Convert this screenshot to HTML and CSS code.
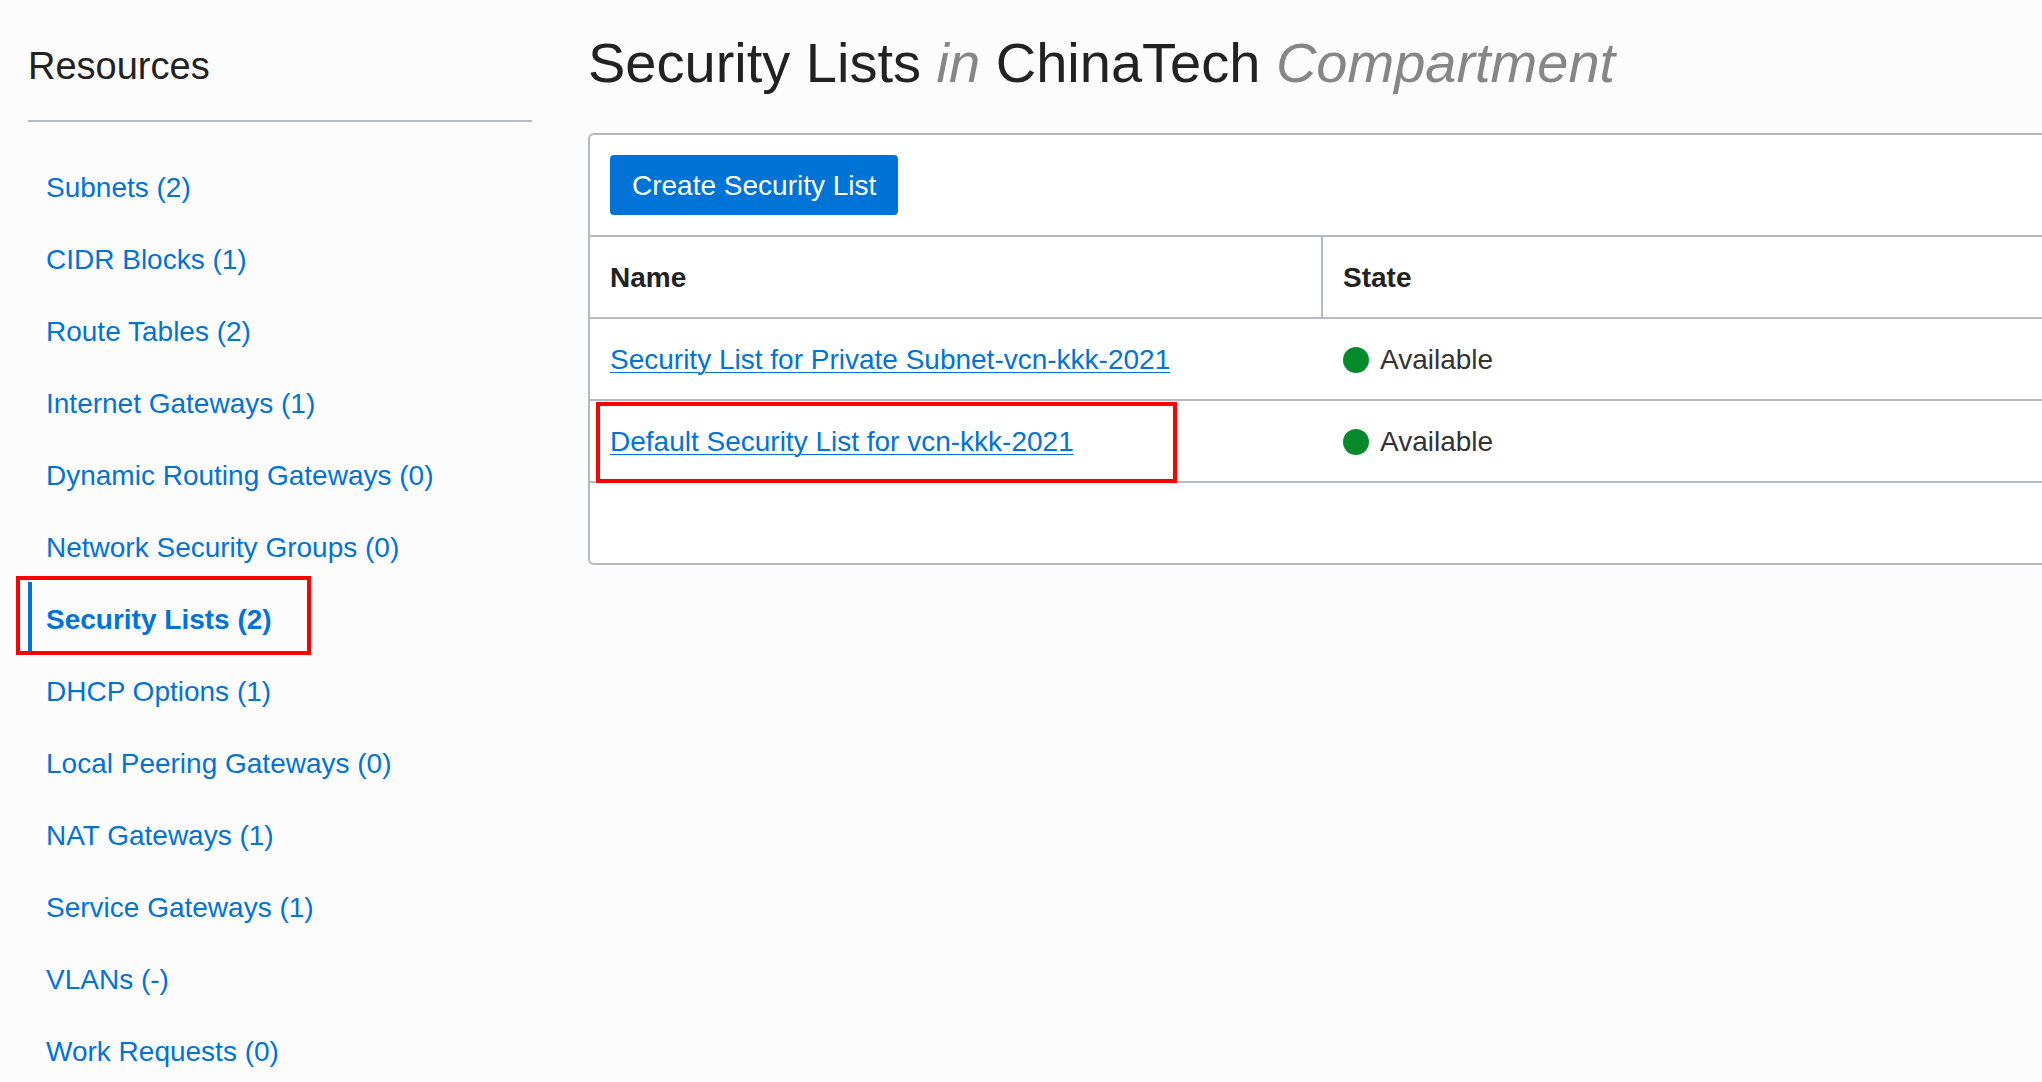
FILE: index.html
```html
<!DOCTYPE html>
<html lang="en">
<head>
<meta charset="utf-8">
<title>Security Lists</title>
<link rel="stylesheet" href="styles.css">
</head>
<body>
<div class="page">
  <nav class="sidebar" aria-labelledby="resources-title">
    <h2 class="sidebar-title" id="resources-title">Resources</h2>
    <ul class="resource-list">
      <li class="resource"><a href="#">Subnets (2)</a></li>
      <li class="resource"><a href="#">CIDR Blocks (1)</a></li>
      <li class="resource"><a href="#">Route Tables (2)</a></li>
      <li class="resource"><a href="#">Internet Gateways (1)</a></li>
      <li class="resource"><a href="#">Dynamic Routing Gateways (0)</a></li>
      <li class="resource"><a href="#">Network Security Groups (0)</a></li>
      <li class="resource active"><a href="#" aria-current="page">Security Lists (2)</a></li>
      <li class="resource"><a href="#">DHCP Options (1)</a></li>
      <li class="resource"><a href="#">Local Peering Gateways (0)</a></li>
      <li class="resource"><a href="#">NAT Gateways (1)</a></li>
      <li class="resource"><a href="#">Service Gateways (1)</a></li>
      <li class="resource"><a href="#">VLANs (-)</a></li>
      <li class="resource"><a href="#">Work Requests (0)</a></li>
    </ul>
  </nav>
  <main class="content">
    <h1 class="title">Security Lists <em>in</em> ChinaTech <em>Compartment</em></h1>
    <section class="panel">
      <div class="toolbar"><button class="create" type="button">Create Security List</button></div>
      <table class="lists">
        <thead>
          <tr><th class="name-col" scope="col">Name</th><th scope="col">State</th></tr>
        </thead>
        <tbody>
          <tr>
            <td><a href="#">Security List for Private Subnet-vcn-kkk-2021</a></td>
            <td><span class="state">Available</span></td>
          </tr>
          <tr>
            <td class="marked"><a href="#">Default Security List for vcn-kkk-2021</a></td>
            <td><span class="state">Available</span></td>
          </tr>
        </tbody>
      </table>
      <div class="panel-footer"></div>
    </section>
  </main>
</div>
</body>
</html>
```
FILE: styles.css
```css
*,
*::before,
*::after {
  box-sizing: border-box;
}

body {
  margin: 0;
  background: #fcfcfc;
  color: #222;
  font: 28px/36px "Liberation Sans", Arial, sans-serif;
}

a {
  color: #0073d7;
}

.page {
  display: flex;
  gap: 56px;
  padding-left: 28px;
}

.sidebar {
  flex: 0 0 504px;
  padding-top: 44px;
}

.sidebar-title {
  margin: 0;
  padding-bottom: 32px;
  border-bottom: 2px solid #b3b9c5;
  font-size: 38px;
  font-weight: 300;
  line-height: 44px;
}

.resource-list {
  margin: 28px 0 0;
  padding: 0;
  list-style: none;
}

.resource {
  padding: 20px 0 16px 14px;
  border-left: 4px solid transparent;
}

.resource:last-child {
  padding-bottom: 8px;
}

.resource a {
  text-decoration: none;
}

.active {
  position: relative;
  border-left-color: #0073d7;
  font-weight: bold;
}

/* Red callouts drawn over the page */
.active::after,
.marked::after {
  content: "";
  position: absolute;
  border: 4px solid #f00;
  pointer-events: none;
}

.active::after {
  top: -6px;
  bottom: -1px;
  left: -16px;
  width: 295px;
}

.content {
  flex: 1;
  min-width: 0;
  padding-top: 31px;
}

.title {
  margin: 0 0 38px;
  font-size: 56px;
  font-weight: 400;
  line-height: 64px;
}

.title em {
  color: #868686;
}

.panel {
  border: 2px solid #b3b9c5;
  border-right: 0;
  border-radius: 6px 0 0 6px;
  background: #fff;
}

.toolbar {
  padding: 20px;
  border-bottom: 2px solid #b3b9c5;
}

.create {
  display: block;
  height: 60px;
  padding: 2px 22px 0;
  border: 0;
  border-radius: 4px;
  background: #0073d7;
  color: #fff;
  font: inherit;
}

.lists {
  width: 100%;
  border-spacing: 0;
  table-layout: fixed;
}

.lists th,
.lists td {
  padding: 23px 20px 21px;
  border-bottom: 2px solid #b3b9c5;
  text-align: left;
}

.lists td a {
  text-decoration-thickness: 1px;
  text-underline-offset: 3px;
}

.lists .name-col {
  width: 733px;
  border-right: 2px solid #b3b9c5;
}

.marked {
  position: relative;
}

.marked::after {
  top: 1px;
  bottom: -2px;
  left: 6px;
  width: 581px;
}

.state {
  display: flex;
  align-items: center;
  gap: 11px;
  color: #333;
}

.state::before {
  content: "";
  width: 26px;
  height: 26px;
  border-radius: 50%;
  background: #048a2a;
}

.panel-footer {
  height: 80px;
}
```
